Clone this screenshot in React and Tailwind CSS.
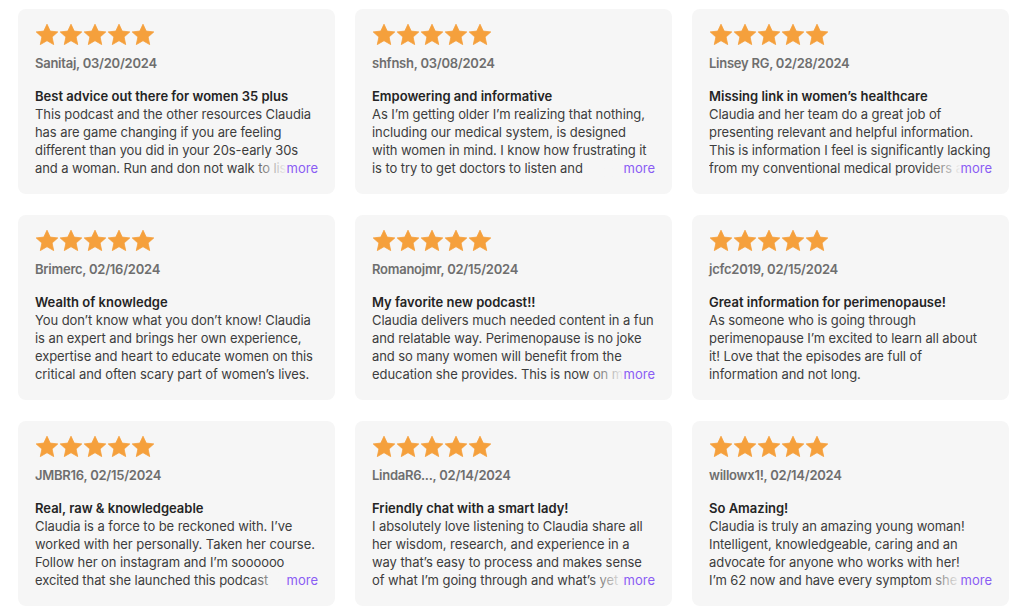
import React from 'react';

// review bodies keep the line breaks of the original layout
const reviews = [
  {
    author: 'Sanitaj',
    date: '03/20/2024',
    title: 'Best advice out there for women 35 plus',
    body: 'This podcast and the other resources Claudia\nhas are game changing if you are feeling\ndifferent than you did in your 20s-early 30s\nand a woman. Run and don not walk to listen to this podcast.',
    more: true,
  },
  {
    author: 'shfnsh',
    date: '03/08/2024',
    title: 'Empowering and informative',
    body: 'As I’m getting older I’m realizing that nothing,\nincluding our medical system, is designed\nwith women in mind. I know how frustrating it\nis to try to get doctors to listen and\nunderstand what we are going through.',
    more: true,
  },
  {
    author: 'Linsey RG',
    date: '02/28/2024',
    title: 'Missing link in women’s healthcare',
    body: 'Claudia and her team do a great job of\npresenting relevant and helpful information.\nThis is information I feel is significantly lacking\nfrom my conventional medical providers and I am so grateful.',
    more: true,
  },
  {
    author: 'Brimerc',
    date: '02/16/2024',
    title: 'Wealth of knowledge',
    body: 'You don’t know what you don’t know! Claudia\nis an expert and brings her own experience,\nexpertise and heart to educate women on this\ncritical and often scary part of women’s lives.',
    more: false,
  },
  {
    author: 'Romanojmr',
    date: '02/15/2024',
    title: 'My favorite new podcast!!',
    body: 'Claudia delivers much needed content in a fun\nand relatable way. Perimenopause is no joke\nand so many women will benefit from the\neducation she provides. This is now on my must listen list.',
    more: true,
  },
  {
    author: 'jcfc2019',
    date: '02/15/2024',
    title: 'Great information for perimenopause!',
    body: 'As someone who is going through\nperimenopause I’m excited to learn all about\nit! Love that the episodes are full of\ninformation and not long.',
    more: false,
  },
  {
    author: 'JMBR16',
    date: '02/15/2024',
    title: 'Real, raw & knowledgeable',
    body: 'Claudia is a force to be reckoned with. I’ve\nworked with her personally. Taken her course.\nFollow her on instagram and I’m soooooo\nexcited that she launched this podcast\nand every woman needs to hear it.',
    more: true,
  },
  {
    author: 'LindaR6...',
    date: '02/14/2024',
    title: 'Friendly chat with a smart lady!',
    body: 'I absolutely love listening to Claudia share all\nher wisdom, research, and experience in a\nway that’s easy to process and makes sense\nof what I’m going through and what’s yet to come.',
    more: true,
  },
  {
    author: 'willowx1!',
    date: '02/14/2024',
    title: 'So Amazing!',
    body: 'Claudia is truly an amazing young woman!\nIntelligent, knowledgeable, caring and an\nadvocate for anyone who works with her!\nI’m 62 now and have every symptom she talks about.',
    more: true,
  },
];

function Star() {
  return (
    <svg width="24" height="24" viewBox="0 0 24 24" className="block">
      <polygon
        points="12,1.2 15.2,8.1 22.8,8.9 17.1,14 18.7,21.6 12,17.7 5.3,21.6 6.9,14 1.2,8.9 8.8,8.1"
        fill="#f5a03c"
        stroke="#f5a03c"
        strokeWidth="0.8"
        strokeLinejoin="round"
      />
    </svg>
  );
}

function ReviewCard({ review }) {
  return (
    <div className="h-[185px] rounded-lg bg-[#f6f6f6] px-[17px] pt-[14px]">
      <div className="flex">
        {[0, 1, 2, 3, 4].map((i) => (
          <Star key={i} />
        ))}
      </div>
      <div className="mt-[7px] text-[13px] leading-[18px] font-semibold tracking-[-0.25px] text-[#6e6e6e]">
        {review.author}, {review.date}
      </div>
      <div className="mt-[15px] text-[13px] leading-[18px] font-semibold text-[#242424]">
        {review.title}
      </div>
      {/* body is cut to four lines, "more" sits over the end of the last one */}
      <div className="relative h-[72px] overflow-hidden text-[13px] leading-[18px] tracking-[-0.08px] whitespace-pre text-[#3d3d3d]">
        <p>{review.body}</p>
        {review.more && (
          <div className="absolute bottom-0 right-0 flex h-[18px]">
            <span className="w-[36px] bg-gradient-to-r from-[#f6f6f6]/0 to-[#f6f6f6]" />
            <button className="bg-[#f6f6f6] text-[13px] leading-[18px] tracking-normal text-[#8a5cf4]">more</button>
          </div>
        )}
      </div>
    </div>
  );
}

export default function App() {
  return (
    <div
      className="min-h-screen bg-white pl-[18px] pt-[9px] antialiased"
      style={{ fontFamily: 'Inter, "Noto Sans", sans-serif' }}
    >
      <div className="grid grid-cols-[repeat(3,317px)] gap-x-5 gap-y-[21px]">
        {reviews.map((r) => (
          <ReviewCard key={r.author} review={r} />
        ))}
      </div>
    </div>
  );
}
